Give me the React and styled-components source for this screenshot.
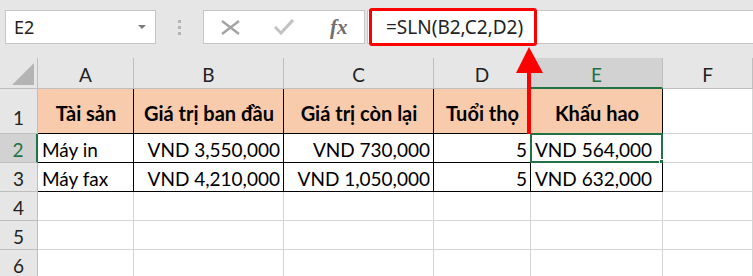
import React from "react";
import styled, { createGlobalStyle } from "styled-components";

const GlobalStyle = createGlobalStyle`
  html, body {
    margin: 0;
    padding: 0;
    background: #e6e6e6;
  }
  * {
    box-sizing: border-box;
  }
`;

const GREEN = "#217346";
const GRID = "#d4d4d4";
const HEAD_LINE = "#bfbfbf";

const Page = styled.div`
  position: relative;
  width: 753px;
  height: 276px;
  overflow: hidden;
  background: #e6e6e6;
  font-family: Lato, "Liberation Sans", sans-serif;
`;

const Toolbar = styled.div`
  display: flex;
  align-items: flex-start;
  height: 58px;
  padding: 10px 0 0 5px;
`;

const NameBox = styled.div`
  display: flex;
  align-items: center;
  justify-content: space-between;
  width: 151px;
  height: 34px;
  padding: 0 9px 0 8px;
  background: #fff;
  border: 1px solid #c6c6c6;
  font-family: "Noto Sans", sans-serif;
  font-size: 18px;
  color: #222;
`;

const Caret = styled.span`
  width: 0;
  height: 0;
  border-left: 4px solid transparent;
  border-right: 4px solid transparent;
  border-top: 4px solid #7a7a7a;
`;

const Grip = styled.div`
  display: flex;
  flex-direction: column;
  align-items: center;
  gap: 3px;
  width: 47px;
  padding-top: 10px;
`;

const Dot = styled.span`
  width: 3px;
  height: 3px;
  background: #b4b4b4;
`;

const IconBox = styled.div`
  display: flex;
  align-items: center;
  width: 162px;
  height: 34px;
  padding-left: 17px;
  gap: 34px;
  background: #fff;
  border: 1px solid #c6c6c6;
`;

const Fx = styled.span`
  font-family: "Liberation Serif", serif;
  font-style: italic;
  font-weight: bold;
  font-size: 21px;
  color: #6e6e6e;
  margin-left: 2px;
`;

const FormulaInput = styled.div`
  flex: 1;
  display: flex;
  align-items: center;
  height: 34px;
  margin-left: 2px;
  padding-left: 18px;
  background: #fff;
  border: 1px solid #c6c6c6;
  border-right: none;
  font-family: "Noto Sans", sans-serif;
  font-size: 19px;
  color: #222;
`;

const RedFrame = styled.div`
  position: absolute;
  left: 369px;
  top: 8px;
  width: 168px;
  height: 38px;
  border: 3px solid #ff0000;
  border-radius: 3px;
`;

const Arrow = styled.svg`
  position: absolute;
  left: 514px;
  top: 46px;
`;

const Sheet = styled.div`
  display: grid;
  grid-template-columns: 38px 96px 150px 150px 97px 132px 1fr;
  grid-template-rows: 31px 45px 29px 29px 29px 29px 29px;
  background: #fff;
`;

const ColHead = styled.div`
  display: flex;
  align-items: center;
  justify-content: center;
  padding-top: 3px;
  background: ${(p) => (p.$active ? "#d2d2d2" : "#e6e6e6")};
  color: ${(p) => (p.$active ? GREEN : "#222")};
  border-bottom: ${(p) => (p.$active ? `2px solid ${GREEN}` : `1px solid ${HEAD_LINE}`)};
  border-right: 1px solid ${HEAD_LINE};
  font-size: 19px;
  position: relative;
`;

const Corner = styled(ColHead)`
  align-items: flex-end;
  justify-content: flex-end;
  padding: 0 3px 3px 0;
`;

const RowHead = styled.div`
  display: flex;
  align-items: center;
  justify-content: center;
  padding-top: ${(p) => (p.$tall ? "12px" : "2px")};
  background: ${(p) => (p.$active ? "#d2d2d2" : "#e6e6e6")};
  color: ${(p) => (p.$active ? GREEN : "#222")};
  border-right: ${(p) => (p.$active ? `2px solid ${GREEN}` : `1px solid ${HEAD_LINE}`)};
  border-bottom: 1px solid ${HEAD_LINE};
  font-size: 19px;
`;

const Cell = styled.div`
  position: relative;
  display: flex;
  align-items: center;
  justify-content: ${(p) =>
    p.$align === "right" ? "flex-end" : p.$align === "center" ? "center" : "flex-start"};
  padding: ${(p) => (p.$bold ? "3px" : "2px")} 3px 0 4px;
  background: ${(p) => (p.$fill ? "#f8cbad" : "#fff")};
  border-right: 1px solid ${(p) => (p.$boxed ? "#000" : GRID)};
  border-bottom: 1px solid ${(p) => (p.$boxed ? "#000" : GRID)};
  font-size: ${(p) => (p.$bold ? "20px" : "19px")};
  font-weight: ${(p) => (p.$bold ? 700 : 400)};
  color: #000;
  white-space: nowrap;
`;

const Selection = styled.div`
  position: absolute;
  left: -1px;
  top: -1px;
  right: -1px;
  bottom: -1px;
  border: 2px solid ${GREEN};
`;

const FillHandle = styled.span`
  position: absolute;
  right: -5px;
  bottom: -5px;
  width: 7px;
  height: 7px;
  background: ${GREEN};
  border: 1px solid #fff;
`;

const columns = ["A", "B", "C", "D", "E", "F"];

const rows = [
  [
    { v: "Tài sản", align: "center" },
    { v: "Giá trị ban đầu", align: "center" },
    { v: "Giá trị còn lại", align: "center" },
    { v: "Tuổi thọ", align: "center" },
    { v: "Khấu hao", align: "center" },
  ],
  [
    { v: "Máy in" },
    { v: "VND 3,550,000", align: "right" },
    { v: "VND 730,000", align: "right" },
    { v: "5", align: "right" },
    { v: "VND 564,000" },
  ],
  [
    { v: "Máy fax" },
    { v: "VND 4,210,000", align: "right" },
    { v: "VND 1,050,000", align: "right" },
    { v: "5", align: "right" },
    { v: "VND 632,000" },
  ],
];

const App = () => {
  const allRows = [1, 2, 3, 4, 5, 6];

  return (
    <Page>
      <GlobalStyle />
      <Toolbar>
        <NameBox>
          E2
          <Caret />
        </NameBox>
        <Grip>
          <Dot />
          <Dot />
          <Dot />
        </Grip>
        <IconBox>
          <svg width="19" height="15" viewBox="0 0 19 15">
            <path d="M1 1 L18 14 M18 1 L1 14" stroke="#a3a3a3" strokeWidth="2.4" fill="none" />
          </svg>
          <svg width="20" height="16" viewBox="0 0 20 16">
            <path d="M1 8 L7 14 L19 1" stroke="#c2c2c2" strokeWidth="3" fill="none" />
          </svg>
          <Fx>fx</Fx>
        </IconBox>
        <FormulaInput>=SLN(B2,C2,D2)</FormulaInput>
      </Toolbar>

      <Sheet>
        <Corner>
          <svg width="22" height="22" viewBox="0 0 22 22">
            <polygon points="22,0 22,22 0,22" fill="#b4b4b4" />
          </svg>
        </Corner>
        {columns.map((c) => (
          <ColHead key={c} $active={c === "E"}>
            {c}
          </ColHead>
        ))}

        {allRows.map((r) => {
          const data = rows[r - 1];
          return (
            <React.Fragment key={r}>
              <RowHead $active={r === 2} $tall={r === 1}>
                {r}
              </RowHead>
              {columns.map((c, i) => {
                const cell = data && data[i];
                if (!cell) {
                  return <Cell key={c} />;
                }
                const selected = r === 2 && c === "E";
                return (
                  <Cell
                    key={c}
                    $boxed
                    $fill={r === 1}
                    $bold={r === 1}
                    $align={cell.align}
                  >
                    {cell.v}
                    {selected && (
                      <Selection>
                        <FillHandle />
                      </Selection>
                    )}
                  </Cell>
                );
              })}
            </React.Fragment>
          );
        })}
      </Sheet>

      <RedFrame />
      <Arrow width="30" height="88" viewBox="0 0 30 88">
        <polygon points="15,1 2,27 29,27" fill="#ff0000" />
        <rect x="13" y="26" width="4" height="62" fill="#ff0000" />
      </Arrow>
    </Page>
  );
};

export default App;
